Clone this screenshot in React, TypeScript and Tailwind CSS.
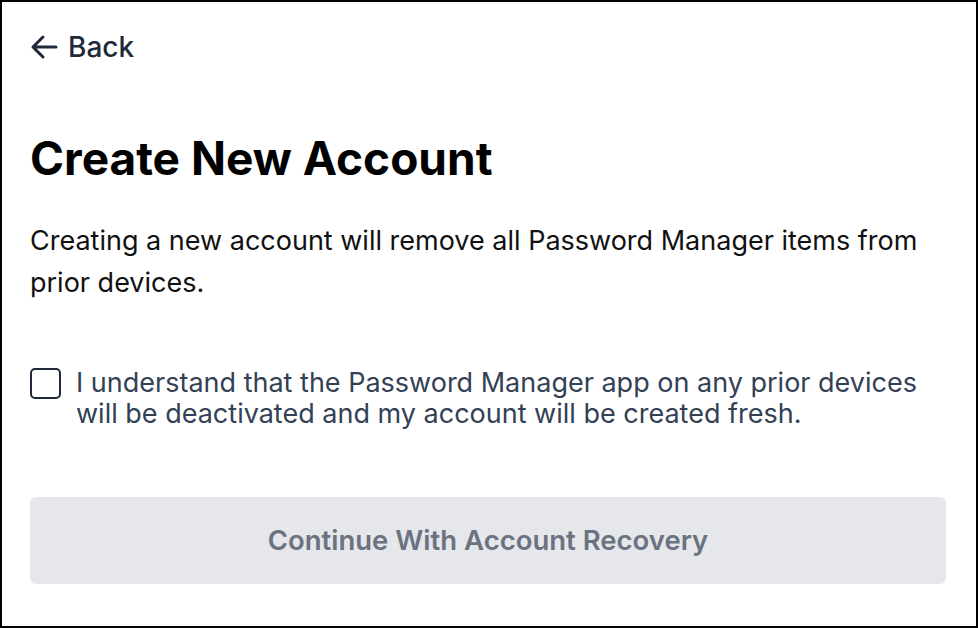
export default function App() {
	return (
		<div
			className="box-border flex h-[628px] w-[978px] flex-col border-2 border-black bg-white px-[28px]"
			style={{ fontFamily: 'Inter, "Liberation Sans", sans-serif' }}
		>
			<button className="mt-[28px] flex h-[34px] items-center gap-[10px] self-start text-[28px] font-medium leading-[34px] text-[#1e293b]">
				<svg width="28" height="26" viewBox="0 0 28 26" fill="none" stroke="currentColor" strokeWidth="3" strokeLinecap="round" strokeLinejoin="round">
					<path d="M13 3 L3 13 L13 23 M3 13 H26" />
				</svg>
				<span>Back</span>
			</button>
			<h1 className="mt-[66px] text-[46px] font-bold leading-[56px] text-black">
				Create New Account
			</h1>
			<p className="mt-[34px] text-[27px] leading-[42px] text-[#111111]">
				Creating a new account will remove all Password Manager items from prior devices.
			</p>
			<label className="mt-[63px] flex items-start gap-[15px]">
				<span className="mt-[1px] h-[31px] w-[31px] shrink-0 rounded-[5px] border-2 border-[#1e293b]" />
				<span className="text-[27px] leading-[31px] text-[#334155]">
					I understand that the Password Manager app on any prior devices will be deactivated and my account will be created fresh.
				</span>
			</label>
			<button className="mt-[68px] flex h-[87px] w-[916px] items-center justify-center rounded-[6px] bg-[#e5e7eb] text-[27.5px] font-semibold text-[#6b7280]">
				Continue With Account Recovery
			</button>
		</div>
	);
}
